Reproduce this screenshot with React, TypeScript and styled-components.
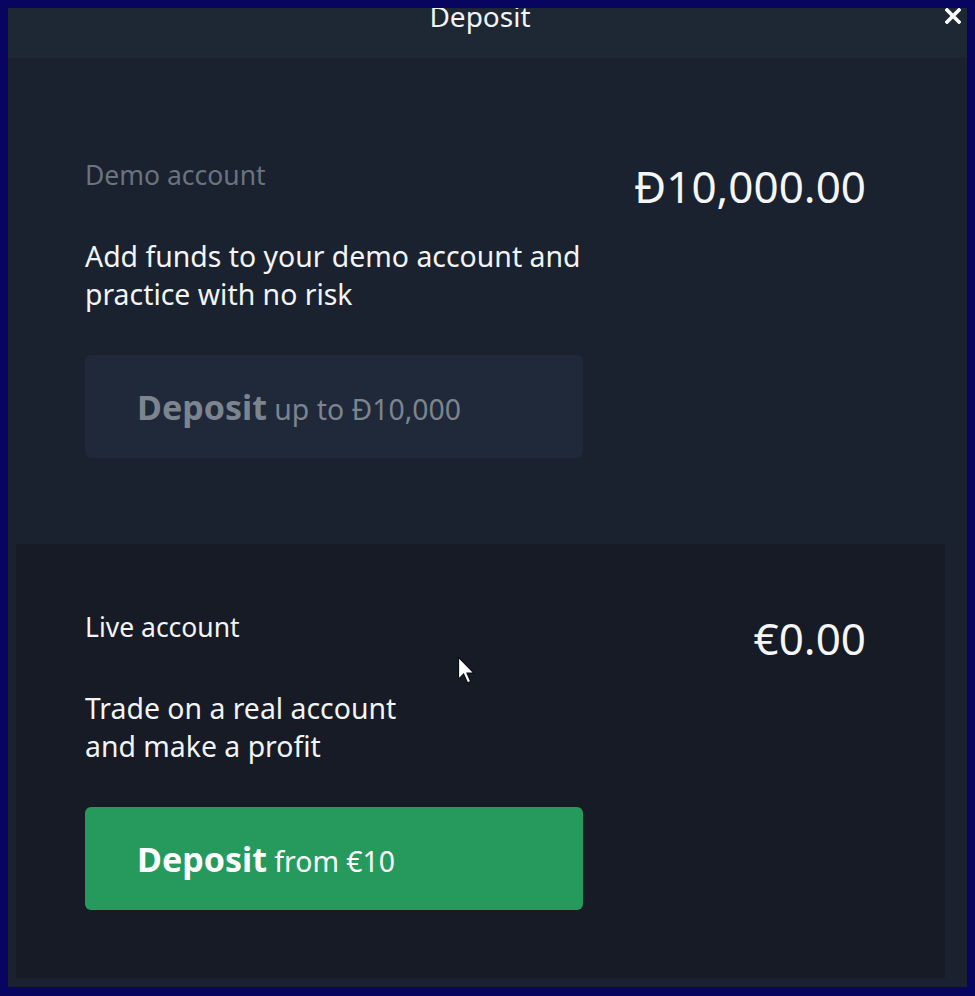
import React from "react";
import styled, { createGlobalStyle } from "styled-components";

const GlobalStyle = createGlobalStyle`
  html { background: #07055f; }
  body {
    margin: 8px;
    background: #07055f;
    font-family: "Noto Sans", "Open Sans", sans-serif;
  }
  * { box-sizing: border-box; }
`;

const Modal = styled.div`
  position: relative;
  width: 959px;
  height: 979px;
  background: #1a222f;
  display: flex;
  flex-direction: column;
  overflow: hidden;
`;

const Header = styled.header`
  height: 50px;
  flex: none;
  background: #1e2835;
  display: grid;
  grid-template-columns: 1fr auto 1fr;
  align-items: start;
  padding: 0 6px 0 0;
`;

const Title = styled.h1`
  grid-column: 2;
  margin: 0 9px 0 0;
  font-size: 28px;
  line-height: 16px;
  font-weight: 400;
  color: #f2f4f6;
`;

const CloseButton = styled.button`
  grid-column: 3;
  justify-self: end;
  width: 16px;
  height: 16px;
  padding: 0;
  border: 0;
  background: none;
  display: flex;
  cursor: pointer;
`;

const Body = styled.div`
  flex: 1;
  display: flex;
  flex-direction: column;
  padding: 0 22px 9px 8px;
`;

const Section = styled.section<{ $variant: "demo" | "live" }>`
  display: flex;
  justify-content: space-between;
  align-items: flex-start;
  background: ${(p) => (p.$variant === "live" ? "#161b25" : "transparent")};
  padding: ${(p) => (p.$variant === "live" ? "66px 79px 68px 69px" : "100px 101px 86px 77px")};
  margin: ${(p) => (p.$variant === "live" ? "0" : "0 -22px 0 -8px")};
  flex: ${(p) => (p.$variant === "live" ? "1" : "none")};
`;

const Info = styled.div`
  width: 498px;
  display: flex;
  flex-direction: column;
`;

const Label = styled.div<{ $muted?: boolean }>`
  font-size: 26.5px;
  line-height: 34px;
  color: ${(p) => (p.$muted ? "#6a7380" : "#f2f4f6")};
`;

const Description = styled.p`
  margin: 45px 0 0;
  font-size: 28.4px;
  line-height: 38px;
  color: #f2f4f6;
`;

const DepositButton = styled.button<{ $variant: "demo" | "live" }>`
  margin-top: 42px;
  width: 498px;
  height: 103px;
  border: 0;
  border-radius: 6px;
  padding: 0 0 0 52px;
  display: flex;
  align-items: center;
  font-family: inherit;
  background: ${(p) => (p.$variant === "live" ? "#269a5c" : "#1f2939")};
  color: ${(p) => (p.$variant === "live" ? "#ffffff" : "#7c848f")};
  cursor: pointer;
  text-align: left;
`;

const ButtonText = styled.span`
  font-size: 28.4px;
  line-height: normal;
  white-space: nowrap;
`;

const Strong = styled.strong`
  font-size: 34px;
  font-weight: 700;
`;

const Amount = styled.div`
  margin-top: -2px;
  font-size: 44px;
  line-height: 60px;
  color: #f4f6f8;
  white-space: nowrap;
`;

const Cursor = styled.svg`
  position: absolute;
  left: 449px;
  top: 648px;
  pointer-events: none;
`;

export default function App() {
  return (
    <>
      <GlobalStyle />
      <Modal>
        <Header>
          <Title>Deposit</Title>
          <CloseButton aria-label="Close">
            <svg width="16" height="16" viewBox="0 0 16 16">
              <path d="M2 2 L14 14 M14 2 L2 14" stroke="#ffffff" strokeWidth="3.6" strokeLinecap="square" />
            </svg>
          </CloseButton>
        </Header>
        <Body>
          <Section $variant="demo">
            <Info>
              <Label $muted>Demo account</Label>
              <Description>Add funds to your demo account and practice with no risk</Description>
              <DepositButton $variant="demo">
                <ButtonText>
                  <Strong>Deposit</Strong> up to Đ10,000
                </ButtonText>
              </DepositButton>
            </Info>
            <Amount>Đ10,000.00</Amount>
          </Section>
          <Section $variant="live">
            <Info>
              <Label>Live account</Label>
              <Description>
                Trade on a real account
                <br />
                and make a profit
              </Description>
              <DepositButton $variant="live">
                <ButtonText>
                  <Strong>Deposit</Strong> from €10
                </ButtonText>
              </DepositButton>
            </Info>
            <Amount>€0.00</Amount>
          </Section>
        </Body>
        <Cursor width="19" height="29" viewBox="0 0 13 20">
          <path d="M1 1 L1 16 L4.5 12.5 L7.2 18.5 L9.4 17.6 L6.8 11.8 L11.6 11.8 Z" fill="#ffffff" stroke="#0b0f16" strokeWidth="0.8" />
        </Cursor>
      </Modal>
    </>
  );
}
